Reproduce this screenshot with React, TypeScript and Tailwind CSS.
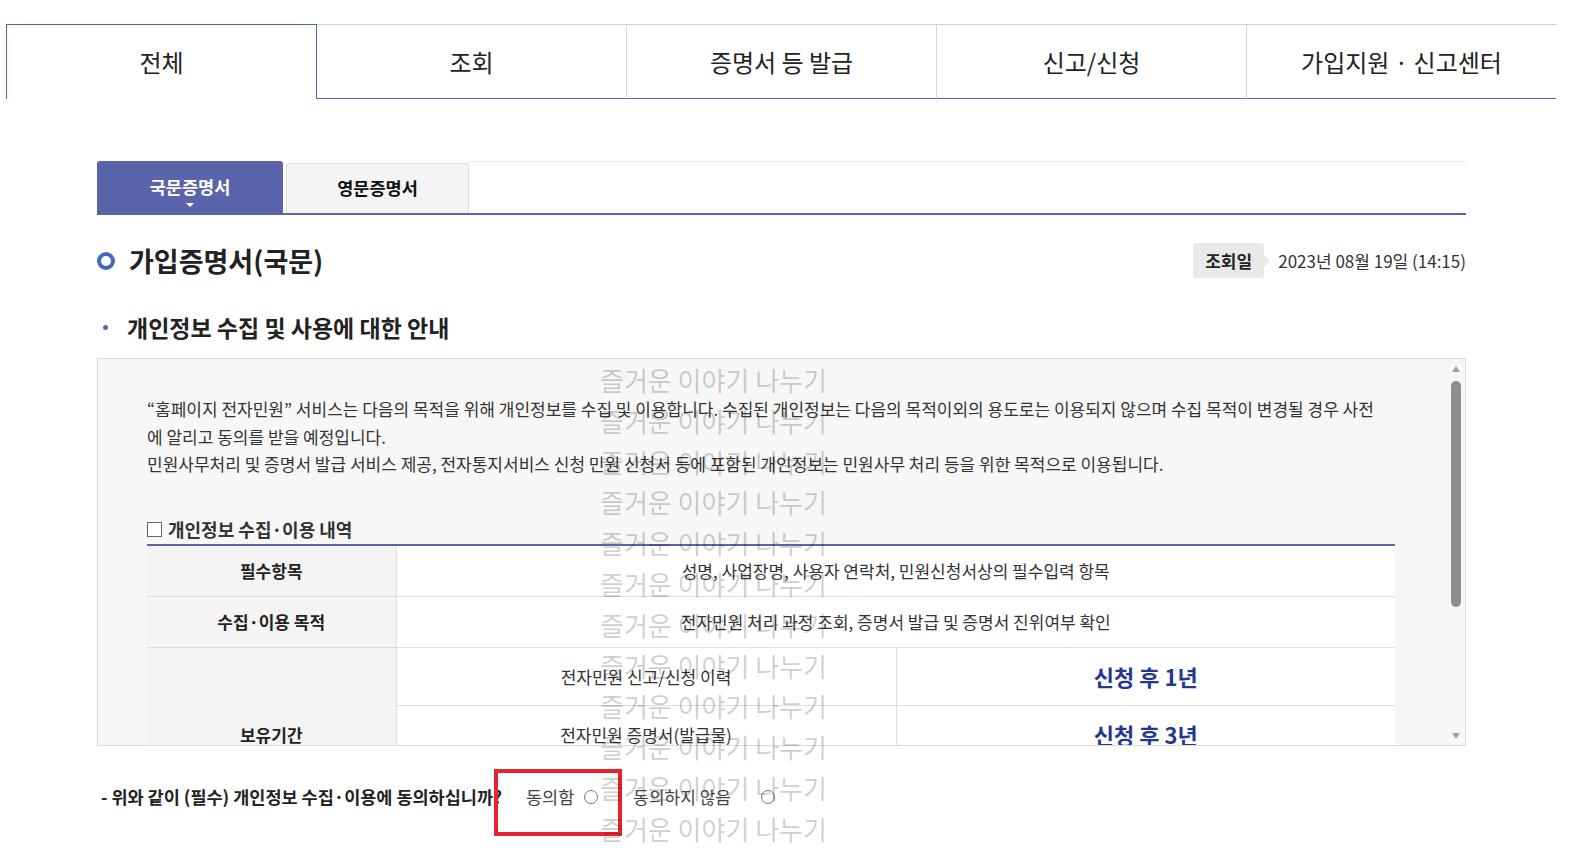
import React from 'react';

const TOP_TABS = ['전체', '조회', '증명서 등 발급', '신고/신청', '가입지원 · 신고센터'];

// 화면 위에 반복해서 깔린 워터마크 문구
const WATERMARK = Array.from({ length: 12 }, () => '즐거운 이야기 나누기');

function Radio() {
  return <span className="inline-block w-[14px] h-[14px] rounded-full border border-[#777] bg-white" />;
}

export default function App() {
  return (
    <div className="relative w-[1596px] h-[868px] overflow-hidden bg-white text-[#222] font-['Noto_Sans_CJK_KR','Noto_Sans',sans-serif]">
      {/* 상단 메뉴 탭 */}
      <div className="pt-[24px] pl-[6px]">
        <div className="flex w-[1550px] h-[75px]">
          {TOP_TABS.map((t, i) =>
            i === 0 ? (
              <div
                key={t}
                className="flex-1 flex items-center justify-center text-[24px] border-t border-l border-r border-[#4a69b5]"
              >
                {t}
              </div>
            ) : (
              <div
                key={t}
                className={
                  'flex-1 flex items-center justify-center text-[24px] border-t border-t-[#cfcfcf] border-b border-b-[#4a69b5] ' +
                  (i < TOP_TABS.length - 1 ? 'border-r border-r-[#d8d8d8]' : '')
                }
              >
                {t}
              </div>
            ),
          )}
        </div>
      </div>

      <div className="ml-[97px] w-[1369px] mt-[62px]">
        {/* 국문/영문 탭 */}
        <div className="flex items-end h-[54px] border-b-2 border-[#5a64ab]">
          <div className="relative w-[186px] h-[52px] bg-[#5a64ab] rounded-t-[3px] flex items-center justify-center text-white text-[17.5px] font-bold">
            국문증명서
            <span className="absolute left-1/2 -translate-x-1/2 bottom-[6px] w-0 h-0 border-l-[4px] border-r-[4px] border-t-[4px] border-l-transparent border-r-transparent border-t-white" />
          </div>
          <div className="ml-[3px] w-[183px] h-[50px] bg-[#f4f4f4] border border-b-0 border-[#ddd] rounded-t-[3px] flex items-center justify-center text-[17.5px] font-bold text-[#111]">
            영문증명서
          </div>
          <div className="flex-1 self-start border-t border-[#e8e8f0]" />
        </div>

        {/* 제목 + 조회일 */}
        <div className="mt-[28px] h-[35px] flex items-center justify-between">
          <div className="flex items-center">
            <span className="w-[18px] h-[18px] rounded-full border-[4px] border-[#4468c2]" />
            <h1 className="ml-[14px] text-[27px] font-bold leading-[35px] text-[#222]">가입증명서(국문)</h1>
          </div>
          <div className="flex items-center">
            <div className="relative h-[35px] w-[71px] bg-[#e9e9e9] rounded-[3px] flex items-center justify-center text-[17px] font-bold text-[#222]">
              조회일
              <span className="absolute right-[-6px] top-1/2 -translate-y-1/2 w-0 h-0 border-t-[6px] border-b-[6px] border-l-[6px] border-t-transparent border-b-transparent border-l-[#e9e9e9]" />
            </div>
            <span className="ml-[14px] text-[17px] text-[#333]">2023년 08월 19일 (14:15)</span>
          </div>
        </div>

        {/* 안내 소제목 */}
        <div className="mt-[34px] h-[30px] flex items-center">
          <span className="ml-[6px] w-[5px] h-[5px] rounded-full bg-[#5a64ab]" />
          <h2 className="ml-[19px] text-[23px] font-bold leading-[30px] text-[#222]">개인정보 수집 및 사용에 대한 안내</h2>
        </div>

        {/* 스크롤 박스 */}
        <div className="mt-[16px] h-[388px] border border-[#dcdcdc] bg-[#f7f7f7] flex">
          <div className="flex-1 overflow-hidden pl-[49px] pr-[51px] pt-[36px]">
            <p className="text-[17px] leading-[27.5px] text-[#333]">
              “홈페이지 전자민원” 서비스는 다음의 목적을 위해 개인정보를 수집 및 이용합니다. 수집된 개인정보는 다음의 목적이외의 용도로는 이용되지 않으며 수집 목적이 변경될 경우 사전
              <br />
              에 알리고 동의를 받을 예정입니다.
              <br />
              민원사무처리 및 증명서 발급 서비스 제공, 전자통지서비스 신청 민원 신청서 등에 포함된 개인정보는 민원사무 처리 등을 위한 목적으로 이용됩니다.
            </p>

            <h3 className="mt-[40px] h-[24px] flex items-center text-[18px] font-bold text-[#333]">
              <span className="w-[15px] h-[15px] border border-[#666] mr-[6px] bg-white" />
              개인정보 수집·이용 내역
            </h3>

            <table className="mt-[2px] w-full border-collapse border-t-2 border-[#5a64ab] text-[17px]">
              <tbody>
                <tr className="h-[52px] border-b border-[#dedede]">
                  <th className="w-[249px] bg-[#f4f4f4] font-bold text-[#222] border-r border-[#dedede]">필수항목</th>
                  <td colSpan={2} className="bg-white text-center text-[#333]">
                    성명, 사업장명, 사용자 연락처, 민원신청서상의 필수입력 항목
                  </td>
                </tr>
                <tr className="h-[51px] border-b border-[#dedede]">
                  <th className="bg-[#f4f4f4] font-bold text-[#222] border-r border-[#dedede]">수집·이용 목적</th>
                  <td colSpan={2} className="bg-white text-center text-[#333]">
                    전자민원 처리 과정 조회, 증명서 발급 및 증명서 진위여부 확인
                  </td>
                </tr>
                <tr className="h-[58px] border-b border-[#dedede]">
                  <th rowSpan={3} className="bg-[#f4f4f4] font-bold text-[#222] border-r border-[#dedede]">
                    보유기간
                  </th>
                  <td className="w-[500px] bg-white text-center text-[#333] border-r border-[#dedede]">전자민원 신고/신청 이력</td>
                  <td className="bg-white text-center text-[22px] font-bold text-[#23388f]">신청 후 1년</td>
                </tr>
                <tr className="h-[58px] border-b border-[#dedede]">
                  <td className="bg-white text-center text-[#333] border-r border-[#dedede]">전자민원 증명서(발급물)</td>
                  <td className="bg-white text-center text-[22px] font-bold text-[#23388f]">신청 후 3년</td>
                </tr>
                <tr className="h-[58px] border-b border-[#dedede]">
                  <td className="bg-white text-center text-[#333] border-r border-[#dedede]">전자민원 처리 관련 기록</td>
                  <td className="bg-white text-center text-[22px] font-bold text-[#23388f]">신청 후 3년</td>
                </tr>
              </tbody>
            </table>
          </div>

          {/* 스크롤바 */}
          <div className="w-[19px] flex flex-col items-center pt-[7px] pb-[6px]">
            <span className="w-0 h-0 border-l-[4px] border-r-[4px] border-b-[6px] border-l-transparent border-r-transparent border-b-[#a0a0a0]" />
            <span className="mt-[9px] w-[10px] h-[226px] rounded-[5px] bg-[#8e8e8e]" />
            <span className="flex-1" />
            <span className="w-0 h-0 border-l-[4px] border-r-[4px] border-t-[6px] border-l-transparent border-r-transparent border-t-[#a0a0a0]" />
          </div>
        </div>

        {/* 동의 여부 */}
        <div className="mt-[36px] h-[30px] flex items-center pl-[4px] text-[17px]">
          <span className="text-[17.5px] font-bold text-[#222]">- 위와 같이 (필수) 개인정보 수집·이용에 동의하십니까?</span>
          <label className="ml-[24px] flex items-center text-[#444] text-[17.5px]">
            동의함
            <span className="ml-[10px] flex">
              <Radio />
            </span>
          </label>
          <label className="ml-[35px] flex items-center text-[#444]">
            동의하지 않음
            <span className="ml-[30px] flex">
              <Radio />
            </span>
          </label>
        </div>
      </div>

      {/* 빨간 강조 표시 */}
      <div className="absolute left-[494px] top-[769px] w-[128px] h-[67px] border-4 border-[#e8232b]" />

      {/* 워터마크 */}
      <div className="pointer-events-none absolute left-[600px] top-[360px] flex flex-col">
        {WATERMARK.map((w, i) => (
          <span key={i} className="text-[26px] leading-[40.8px] text-black/20 whitespace-nowrap">
            {w}
          </span>
        ))}
      </div>
    </div>
  );
}
